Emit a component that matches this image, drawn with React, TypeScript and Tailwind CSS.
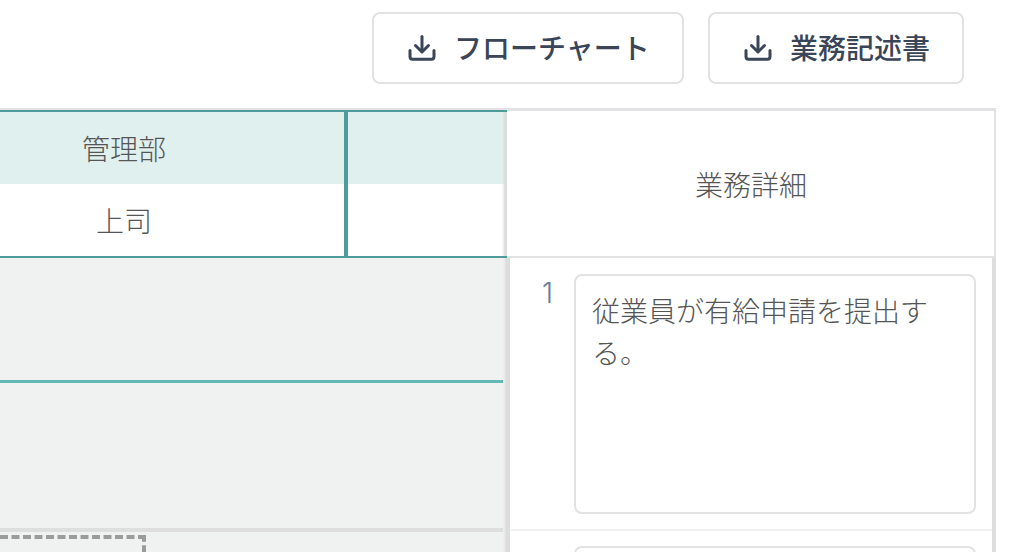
const jp = "font-['Noto_Sans_CJK_JP',sans-serif]";

const DownloadIcon = () => (
  <svg width="28" height="26" viewBox="0 0 28 26" fill="none" stroke="#3a4558" strokeWidth="3" strokeLinecap="round" strokeLinejoin="round" className="shrink-0">
    <path d="M14 1.5V16" />
    <path d="M7.5 10.5L14 17L20.5 10.5" />
    <path d="M2 15.5V21.5C2 23.2 3 24.2 4.5 24.2H23.5C25 24.2 26 23.2 26 21.5V15.5" />
  </svg>
);

const ExportButton = ({ label, width }: { label: string; width: string }) => (
  <button className={`${width} h-[72px] flex items-center gap-[18px] pl-[34px] bg-white border-2 border-[#e2e2e2] rounded-lg text-[28px] font-medium text-[#3a4558]`}>
    <DownloadIcon />
    <span className="pb-[3px]">{label}</span>
  </button>
);

const App = () => {
  return (
    <div className={`h-[552px] w-[1018px] overflow-hidden bg-white ${jp}`}>
      {/* Toolbar */}
      <div className="h-[108px] flex justify-end gap-[24px] pt-[12px] pr-[54px]">
        <ExportButton label="フローチャート" width="w-[312px]" />
        <ExportButton label="業務記述書" width="w-[256px]" />
      </div>

      {/* Table */}
      <div className="w-[996px] border-t-2 border-[#e2e2e4]">
        {/* Header */}
        <div className="flex h-[148px]">
          <div className="relative w-[507px] h-full overflow-hidden shrink-0 border-t-2 border-b-2 border-[#4f9a9a] flex text-[28px] font-light text-[#555]">
            <div className="w-[444px] ml-[-96px] shrink-0 border-r-4 border-[#4f9a9a] flex flex-col">
              <div className="h-[72px] bg-[#e0f0ef] flex items-center justify-center">管理部</div>
              <div className="h-[72px] bg-white flex items-center justify-center">上司</div>
            </div>
            <div className="flex-1 flex flex-col">
              <div className="h-[72px] bg-[#e0f0ef]" />
              <div className="h-[72px] bg-white" />
            </div>
            <div className="absolute right-0 top-0 bottom-0 w-[5px] bg-gradient-to-r from-[#dcdcdc]/0 to-[#dcdcdc] to-60%" />
          </div>
          <div className="flex-1 border-t border-b-2 border-r-2 border-[#e2e2e4] flex items-center justify-center text-[28px] font-light text-[#555] pl-[1px]">
            業務詳細
          </div>
        </div>

        {/* Body */}
        <div className="flex h-[294px]">
          <div className="w-[510px] shrink-0 flex bg-[#f0f2f2]">
            <div className="flex-1 flex flex-col">
              <div className="h-[122px] shrink-0" />
              <div className="h-[3px] shrink-0 bg-[#62b8b2]" />
              <div className="h-[145px] shrink-0" />
              <div className="h-[4px] shrink-0 bg-[#dedede]" />
              <div className="w-[146px] mt-[3px] flex-1 border-t-4 border-r-4 border-dashed border-[#9b9b9b]" />
            </div>
            <div className="w-[7px] shrink-0 bg-gradient-to-r from-[#f0f2f2] to-[#dcdcdc] to-50%" />
          </div>
          <div className="flex-1 border-r-4 border-[#dedede] flex flex-col">
            <div className="flex pt-[16px] pb-[15px] border-b-2 border-[#f1f1f1]">
              <div className="w-[64px] shrink-0 pl-[32px] text-[28px] leading-[38px] font-light text-[#64789a] font-['Inter',sans-serif]">1</div>
              <div className="w-[402px] h-[240px] shrink-0 border-2 border-[#e2e2e2] rounded-lg pt-[13px] px-[16px] text-[28px] leading-[42px] font-light text-[#555]">
                従業員が有給申請を提出する。
              </div>
            </div>
            <div className="flex pt-[15px]">
              <div className="w-[64px] shrink-0" />
              <div className="w-[402px] h-[240px] shrink-0 border-2 border-[#e2e2e2] rounded-lg" />
            </div>
          </div>
        </div>
      </div>
    </div>
  );
};

export default App;
